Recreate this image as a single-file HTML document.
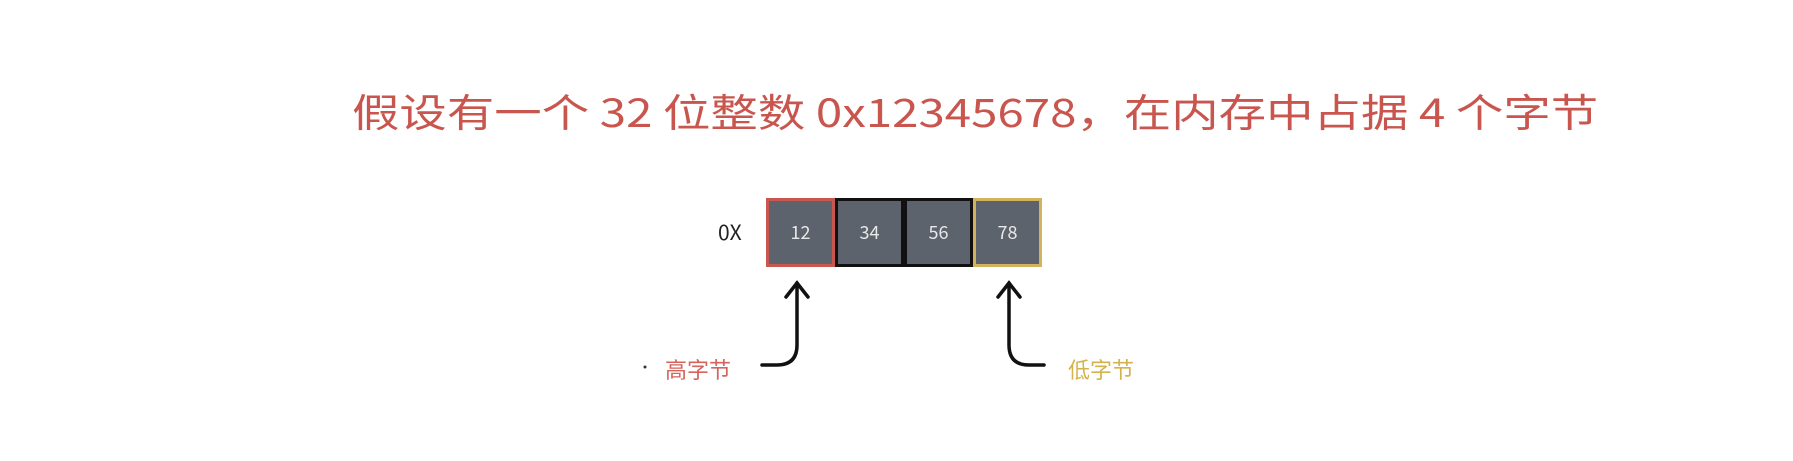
<!DOCTYPE html>
<html><head><meta charset="utf-8"><style>
html,body{margin:0;padding:0;background:#fff;width:1793px;height:461px;overflow:hidden;position:relative;font-family:"Noto Sans CJK SC","Liberation Sans",sans-serif}
.t{position:absolute;left:352px;top:86px;font-size:39px;line-height:50px;color:#c9564e;white-space:nowrap;transform:scaleX(1.216);transform-origin:left top}
.b{position:absolute;top:198px;width:63px;height:63px;background:#5d636c;color:#e8e8e8;font-size:18px;text-align:center;line-height:63px}
.l{position:absolute;font-size:22px;white-space:nowrap;line-height:30px}
</style></head><body>
<div class="t">假设有一个 32 位整数 0x12345678，在内存中占据 4 个字节</div>
<div class="l" style="left:718px;top:217px;color:#222;font-size:21px">0X</div>
<div class="b" style="left:766px;border:3px solid #c9574f">12</div>
<div class="b" style="left:835px;border:3px solid #111">34</div>
<div class="b" style="left:904px;border:3px solid #111">56</div>
<div class="b" style="left:973px;border:3px solid #d2b25a">78</div>
<svg width="1793" height="461" style="position:absolute;left:0;top:0" fill="none" stroke="#111" stroke-width="3.5" stroke-linecap="round">
<path d="M797 283 V345 Q797 365 777 365 H762"/>
<path d="M786 297 L797 283 L808 297"/>
<path d="M1009 283 V345 Q1009 365 1029 365 H1044"/>
<path d="M998 297 L1009 283 L1020 297"/>
<circle cx="645" cy="367" r="1.5" fill="#333" stroke="none"/>
</svg>
<div class="l" style="left:665px;top:354px;color:#d5645c">高字节</div>
<div class="l" style="left:1068px;top:354px;color:#d4b24e">低字节</div>
</body></html>
